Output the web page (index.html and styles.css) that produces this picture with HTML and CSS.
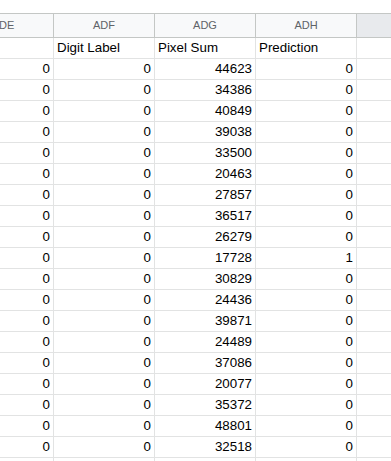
FILE: index.html
```html
<!DOCTYPE html>
<html>
<head>
<meta charset="utf-8">
<link rel="stylesheet" href="styles.css">
</head>
<body>
<div class="sheet">
  <div class="grid">
    <div class="hd">ADE</div><div class="hd">ADF</div><div class="hd">ADG</div><div class="hd">ADH</div><div class="hd blank"></div>

    <div class="c"></div><div class="c t">Digit Label</div><div class="c t">Pixel Sum</div><div class="c t">Prediction</div><div class="c e"></div>
    <div class="c">0</div><div class="c">0</div><div class="c">44623</div><div class="c">0</div><div class="c e"></div>
    <div class="c">0</div><div class="c">0</div><div class="c">34386</div><div class="c">0</div><div class="c e"></div>
    <div class="c">0</div><div class="c">0</div><div class="c">40849</div><div class="c">0</div><div class="c e"></div>
    <div class="c">0</div><div class="c">0</div><div class="c">39038</div><div class="c">0</div><div class="c e"></div>
    <div class="c">0</div><div class="c">0</div><div class="c">33500</div><div class="c">0</div><div class="c e"></div>
    <div class="c">0</div><div class="c">0</div><div class="c">20463</div><div class="c">0</div><div class="c e"></div>
    <div class="c">0</div><div class="c">0</div><div class="c">27857</div><div class="c">0</div><div class="c e"></div>
    <div class="c">0</div><div class="c">0</div><div class="c">36517</div><div class="c">0</div><div class="c e"></div>
    <div class="c">0</div><div class="c">0</div><div class="c">26279</div><div class="c">0</div><div class="c e"></div>
    <div class="c">0</div><div class="c">0</div><div class="c">17728</div><div class="c">1</div><div class="c e"></div>
    <div class="c">0</div><div class="c">0</div><div class="c">30829</div><div class="c">0</div><div class="c e"></div>
    <div class="c">0</div><div class="c">0</div><div class="c">24436</div><div class="c">0</div><div class="c e"></div>
    <div class="c">0</div><div class="c">0</div><div class="c">39871</div><div class="c">0</div><div class="c e"></div>
    <div class="c">0</div><div class="c">0</div><div class="c">24489</div><div class="c">0</div><div class="c e"></div>
    <div class="c">0</div><div class="c">0</div><div class="c">37086</div><div class="c">0</div><div class="c e"></div>
    <div class="c">0</div><div class="c">0</div><div class="c">20077</div><div class="c">0</div><div class="c e"></div>
    <div class="c">0</div><div class="c">0</div><div class="c">35372</div><div class="c">0</div><div class="c e"></div>
    <div class="c">0</div><div class="c">0</div><div class="c">48801</div><div class="c">0</div><div class="c e"></div>
    <div class="c">0</div><div class="c">0</div><div class="c">32518</div><div class="c">0</div><div class="c e"></div>
    <div class="c"></div><div class="c"></div><div class="c"></div><div class="c"></div><div class="c e"></div>
  </div>
</div>
</body>
</html>
```

FILE: styles.css
```css
html, body {
  margin: 0;
  padding: 0;
  background: #ffffff;
}
.sheet {
  width: 391px;
  height: 461px;
  overflow: hidden;
  padding-top: 13px;
  box-sizing: border-box;
}
.grid {
  display: grid;
  grid-template-columns: 101px 101px 101px 101px 100px;
  margin-left: -47px;
  width: 504px;
}
.hd {
  height: 23px;
  line-height: 23px;
  border-top: 1px solid #c4c7c5;
  border-bottom: 1px solid #c4c7c5;
  border-right: 1px solid #c4c7c5;
  background: #f8f9fa;
  color: #5f6368;
  font-family: "Liberation Sans", Arial, sans-serif;
  font-size: 11px;
  text-align: center;
}
.hd.blank {
  background: #e8eaed;
  border-right: none;
}
.c {
  height: 20px;
  line-height: 20px;
  border-bottom: 1px solid #e2e3e3;
  border-right: 1px solid #e2e3e3;
  font-family: "Liberation Sans", Arial, sans-serif;
  font-size: 10pt;
  color: #000000;
  text-align: right;
  padding: 0 3px;
  white-space: nowrap;
  overflow: hidden;
}
.c.t {
  text-align: left;
}
.c.e {
  border-right: none;
}
```
